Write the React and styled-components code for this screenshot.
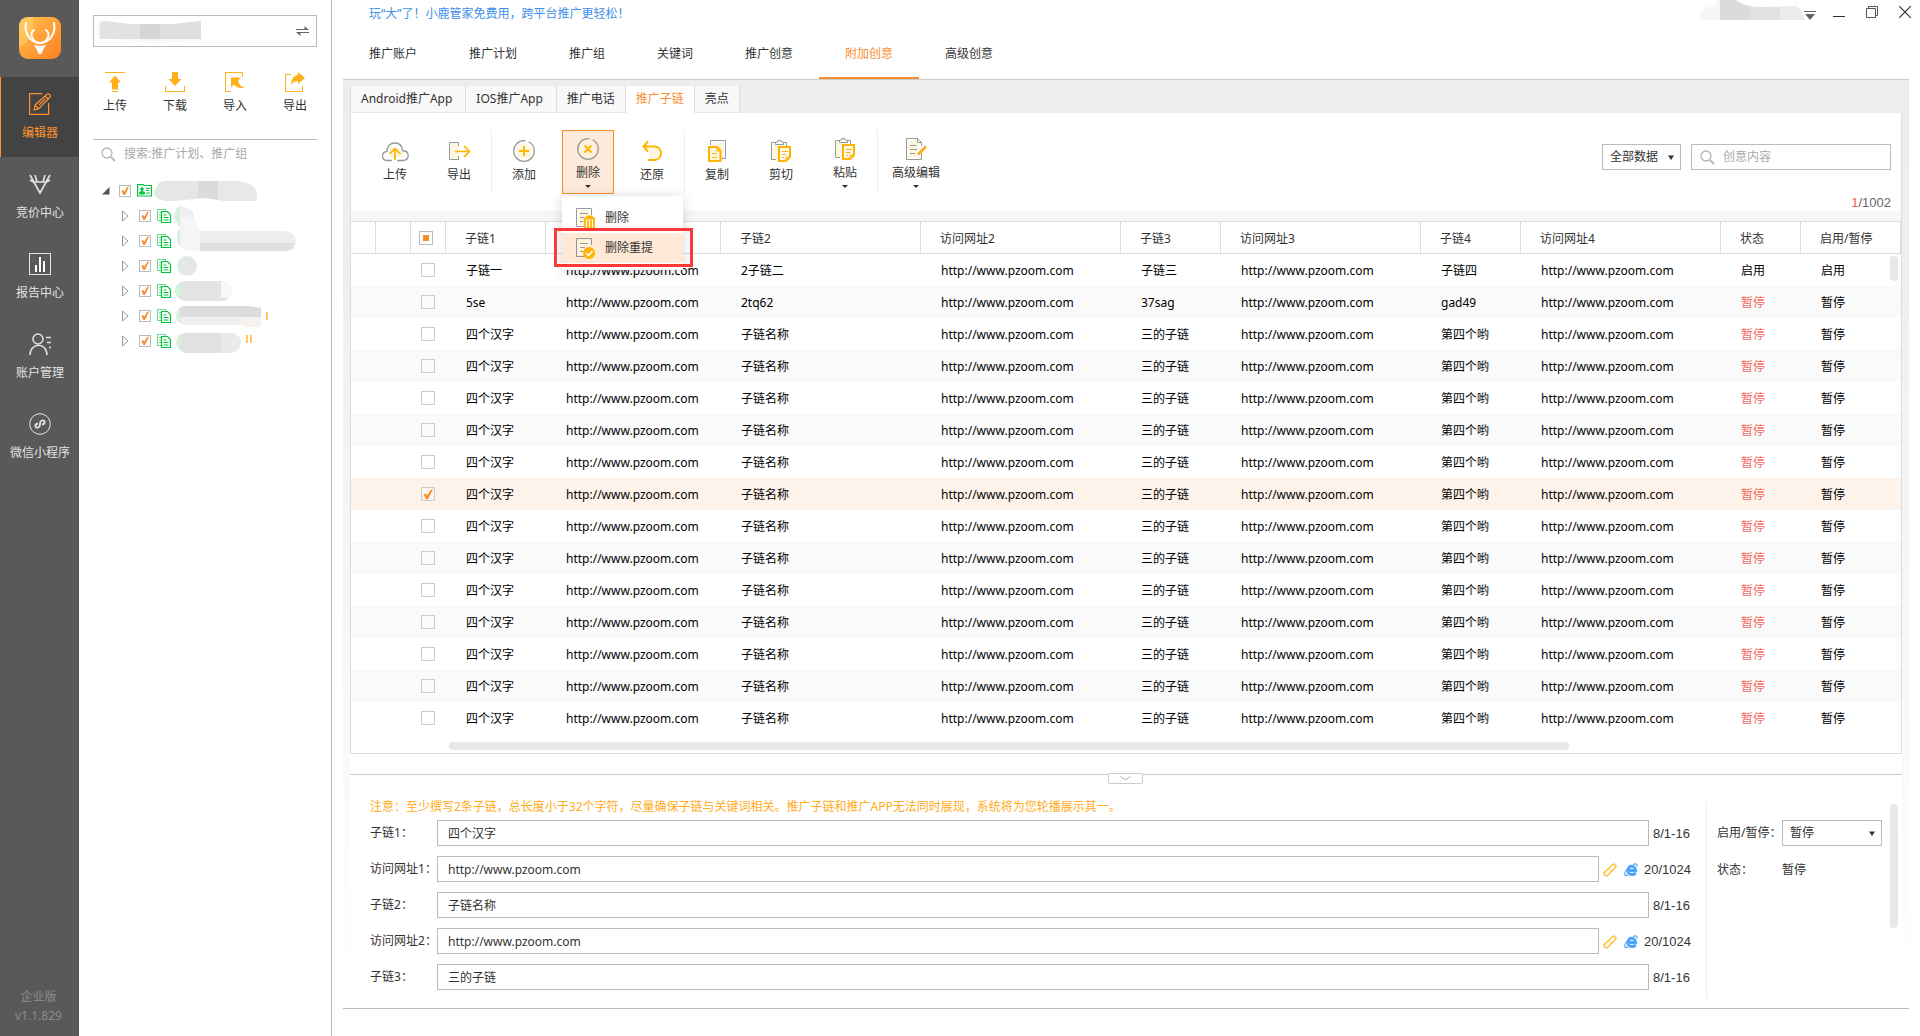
import React, { useState } from 'react';
import styled, { createGlobalStyle, css } from 'styled-components';

const GlobalStyle = createGlobalStyle`
  * {
    box-sizing: border-box;
  }
  body {
    margin: 0;
    background: #fff;
    color: #333;
    font: 12px/16px 'Noto Sans', 'Noto Sans CJK SC', sans-serif;
  }
  button, input, select {
    font: inherit;
    color: inherit;
    margin: 0;
    padding: 0;
    border: 0;
    background: none;
    outline: none;
    border-radius: 0;
  }
  a {
    color: inherit;
    text-decoration: none;
  }
  svg {
    display: block;
    flex: none;
  }
`;

/* ---------- layout ---------- */

const Page = styled.div`
  display: flex;
  min-height: 100vh;
`;

const Sidebar = styled.nav`
  display: flex;
  flex-direction: column;
  flex: none;
  width: 79px;
  background: #595959;
  color: #e2e2e2;
`;

const LogoBox = styled.div`
  display: flex;
  justify-content: center;
  height: 77px;
  padding-top: 17px;
`;

const SideItem = styled.a`
  display: flex;
  flex-direction: column;
  align-items: center;
  gap: 10px;
  height: 80px;
  padding-top: 16px;
  border-left: 1px solid ${props => (props.$active ? '#ff9331' : 'transparent')};
  background: ${props => (props.$active ? '#434343' : 'transparent')};
  color: ${props => (props.$active ? '#ff9331' : '#e2e2e2')};
`;

const Version = styled.div`
  margin-top: auto;
  padding: 0 2px 11px 0;
  text-align: center;
  line-height: 19px;
  color: #8c8c8c;
`;

const TreePanel = styled.aside`
  flex: none;
  width: 253px;
  padding: 15px 14px 0;
  border-right: 1px solid #bbb;
`;

const AccountBox = styled.div`
  display: flex;
  align-items: center;
  justify-content: space-between;
  height: 32px;
  padding: 0 7px 0 2px;
  border: 1px solid #bbb;
`;

const QuickActions = styled.div`
  display: flex;
  justify-content: space-between;
  height: 93px;
  padding: 25px 10px 0;
  border-bottom: 1px solid #bbb;
`;

const QuickButton = styled.button`
  display: flex;
  flex-direction: column;
  align-items: center;
  gap: 6px;
  cursor: pointer;
`;

const TreeSearch = styled.label`
  display: flex;
  align-items: center;
  gap: 8px;
  height: 28px;
  padding-left: 8px;
`;

const SearchInput = styled.input`
  flex: 1;
  min-width: 0;
  &::placeholder {
    color: #a9a9a9;
    opacity: 1;
  }
`;

const Tree = styled.ul`
  margin: 0;
  padding: 10px 0 0;
  list-style: none;
`;

const TreeRow = styled.li`
  display: flex;
  align-items: center;
  height: 25px;
  padding-left: ${props => (props.$child ? 29 : 9)}px;
`;

const Fold = styled.span`
  width: 17px;
`;

const TreeIcon = styled.span`
  width: 15px;
  margin: 0 2px 0 6px;
`;

const Main = styled.main`
  flex: 1;
  min-width: 0;
`;

const TitleBar = styled.header`
  display: flex;
  justify-content: space-between;
  height: 27px;
  padding: 0 9px 0 37px;
`;

const Slogan = styled.a`
  line-height: 27px;
  color: #3f8ee8;
`;

const WindowControls = styled.div`
  display: flex;
  align-items: flex-start;
`;

const WindowButton = styled.button`
  margin: ${props => props.$top || 6}px 0 0 ${props => props.$left}px;
`;

const MainNav = styled.nav`
  display: flex;
  height: 53px;
  margin: 0 11px;
  border-bottom: 1px solid #ccc;
`;

const NavItem = styled.a`
  height: 52px;
  padding: 0 26px;
  line-height: 54px;
  ${props => props.$active && css`
    border-bottom: 2px solid #f78e2f;
    color: #f78e2f;
  `}
`;

const Workspace = styled.div`
  margin: 0 11px;
  padding: 6px 7px 0;
  border-bottom: 1px solid #bbb;
  background: linear-gradient(#ededed, #eee 15%, #fff);
`;

const Tabs = styled.div`
  display: flex;
  height: 27px;
  border-left: 1px solid #ddd;
`;

const Tab = styled.button`
  padding: 0 ${props => (props.$wide ? 13 : 10)}px 0 10px;
  border-right: 1px solid #ddd;
  border-bottom: 1px solid ${props => (props.$active ? '#fff' : '#e5e5e5')};
  background: ${props => (props.$active ? '#fff' : '#f8f8f8')};
  color: ${props => (props.$active ? '#f78e2f' : '#333')};
`;

const Panel = styled.section`
  border: 1px solid #ddd;
  border-top: 0;
  background: #fff;
`;

/* ---------- toolbar ---------- */

const Toolbar = styled.div`
  display: flex;
  height: 98px;
  padding: 17px 10px 0 12px;
`;

const ToolGroup = styled.div`
  display: flex;
  height: 64px;
  border-right: ${props => (props.$last ? '0' : '1px solid #eee')};
`;

const ToolSlot = styled.div`
  position: relative;
  margin: 0 6px;
`;

const ToolButton = styled.button`
  display: flex;
  flex-direction: column;
  align-items: center;
  min-width: 52px;
  height: 64px;
  padding: ${props => (props.$caret ? 7 : 9)}px 7px 0;
  border: 1px solid ${props => (props.$open ? '#f78e2f' : 'transparent')};
  background: ${props => (props.$open ? '#feeadb' : 'transparent')};
`;

const ToolLabel = styled.span`
  margin-top: 5px;
`;

const Filters = styled.div`
  display: grid;
  grid-template-columns: 79px 200px;
  column-gap: 10px;
  align-content: space-between;
  margin-left: auto;
  padding: 14px 0 0;
`;

const SearchBox = styled.label`
  display: flex;
  align-items: center;
  gap: 8px;
  height: 26px;
  padding: 0 8px;
  border: 1px solid #bbb;
`;

const Counter = styled.div`
  grid-column: 2;
  text-align: right;
  font: 13px/16px 'Liberation Sans', sans-serif;
  color: #666;
  b {
    font-weight: normal;
    color: #f0614f;
  }
`;

const SelectBox = styled.div`
  position: relative;
  height: 26px;
  border: 1px solid #bbb;
  select {
    appearance: none;
    width: 100%;
    height: 24px;
    padding: 0 7px;
  }
  svg {
    position: absolute;
    top: 10px;
    right: 6px;
    pointer-events: none;
  }
`;

const Menu = styled.div`
  position: absolute;
  z-index: 2;
  top: 66px;
  left: 0;
  width: 121px;
  padding: 7px 0;
  background: #fff;
  box-shadow: 0 1px 12px rgba(0, 0, 0, 0.16);
`;

const MenuItem = styled.button`
  display: flex;
  align-items: center;
  gap: 9px;
  width: 100%;
  height: 30px;
  padding-left: 14px;
  background: ${props => (props.$hot ? '#fee8d6' : '#fff')};
`;

const Highlight = styled.div`
  position: absolute;
  z-index: 3;
  top: 98px;
  left: -8px;
  width: 139px;
  height: 39px;
  border: 3px solid #fb3838;
  pointer-events: none;
`;

/* ---------- table ---------- */

const Band = styled.div`
  height: 10px;
  background: #f6f6f6;
`;

const TableArea = styled.div`
  position: relative;
`;

const Table = styled.table`
  width: 100%;
  table-layout: fixed;
  border-collapse: separate;
  border-spacing: 0;
`;

const Th = styled.th`
  height: 33px;
  padding: ${props => (props.$tick ? '0 0 0 8px' : '2px 0 0 19px')};
  border: solid #ddd;
  border-width: 1px 1px 1px 0;
  font-weight: normal;
  text-align: left;
  white-space: nowrap;
`;

const Tr = styled.tr`
  color: #000;
  background: ${props => (props.$selected ? '#fef3ea' : props.$odd ? '#fafafa' : '#fff')};
`;

const Td = styled.td`
  height: 32px;
  padding: ${props => (props.$tick ? '0 0 0 10px' : '2px 0 0 20px')};
  color: ${props => (props.$alert ? '#f96a5d' : 'inherit')};
  white-space: nowrap;
`;

const Tick = styled.input`
  appearance: none;
  display: block;
  flex: none;
  width: ${props => props.$size || 14}px;
  height: ${props => props.$size || 14}px;
  border: 1px solid ${props => (props.$strong ? '#bbb' : '#ccc')};
  background: ${props => (props.$partial ? '#f78e2f content-box' : 'transparent')};
  padding: ${props => (props.$partial ? 3 : 0)}px;
  &:checked::after {
    content: '';
    display: block;
    width: 100%;
    height: 100%;
    background: #f78e2f;
    clip-path: polygon(14% 52%, 32% 46%, 42% 62%, 70% 18%, 92% 8%, 50% 94%, 34% 94%);
  }
`;

const ScrollRow = styled.div`
  height: 19px;
  padding: 8px 332px 0 98px;
`;

const Thumb = styled.div`
  height: 8px;
  border-radius: 4px;
  background: #e8e8e8;
`;

const SideThumb = styled.div`
  position: absolute;
  top: ${props => props.$top}px;
  right: ${props => props.$right}px;
  width: 8px;
  height: ${props => props.$length}px;
  border-radius: 4px;
  background: #e8e8e8;
`;

/* ---------- editor ---------- */

const EditorWrap = styled.div`
  padding-top: 20px;
  background: #fff;
`;

const Editor = styled.section`
  position: relative;
  display: flex;
  padding: 24px 0 10px;
  border-top: 1px solid #ccc;
`;

const Collapse = styled.button`
  position: absolute;
  top: -2px;
  left: calc(50% - 18px);
  display: flex;
  align-items: center;
  justify-content: center;
  width: 35px;
  height: 11px;
  border: 1px solid #ccc;
  border-radius: 0 0 2px 2px;
  background: #fff;
`;

const Form = styled.form`
  display: flex;
  flex: 1;
  flex-direction: column;
  gap: 10px;
  min-width: 0;
  padding: 0 15px 8px 20px;
`;

const Note = styled.p`
  margin: 0 0 -5px;
  color: #ffab19;
`;

const Field = styled.div`
  display: flex;
  align-items: center;
`;

const FieldLabel = styled.label`
  flex: none;
  width: ${props => props.$width || 67}px;
  white-space: nowrap;
`;

const FieldInput = styled.input`
  flex: 1;
  min-width: 0;
  height: 26px;
  padding: 0 10px;
  border: 1px solid #bbb;
`;

const FieldMeta = styled.div`
  display: flex;
  align-items: center;
  justify-content: space-between;
  width: ${props => (props.$wide ? 92 : 42)}px;
  padding: 2px 0 0 4px;
  font: 13px/16px 'Liberation Sans', sans-serif;
  white-space: nowrap;
`;

const StatusPane = styled.div`
  position: relative;
  display: flex;
  flex: none;
  flex-direction: column;
  gap: 10px;
  width: 196px;
  margin-top: 4px;
  padding: 17px 20px 0 10px;
  border-left: 1px solid #eee;
`;

const StatusSelect = styled(SelectBox)`
  width: 100px;
`;

const StatusValue = styled.span`
  line-height: 28px;
`;

/* ---------- icons ---------- */

const Icon = ({ w = 22, h = w, children, ...rest }) => (
  <svg width={w} height={h} viewBox={`0 0 ${w} ${h}`} fill="none" stroke="currentColor" aria-hidden="true" {...rest}>
    {children}
  </svg>
);

const Logo = () => (
  <Icon w={42} strokeLinecap="round">
    <defs>
      <linearGradient id="logo" x1="0" y1="0" x2="1" y2="1">
        <stop offset="0" stopColor="#ffc34f" />
        <stop offset="1" stopColor="#fc7f22" />
      </linearGradient>
    </defs>
    <rect width="42" height="42" rx="9" fill="url(#logo)" stroke="none" />
    <path d="M0 30C10 27 15 16 14 0H9C3 0 0 4 0 9z" fill="#ffd56e" opacity=".5" stroke="none" />
    <path d="M7 6C5 16 11 26 21 26S37 16 35 6" stroke="#fff" strokeWidth="2" />
    <path d="M15 13C10 17 13 24 20 26M27 13C32 17 29 24 22 26" stroke="#fff" strokeWidth="2" />
    <path d="M15 28l6 1 6-1-3 5-1.500 4h-3L18 33z" fill="#fff" stroke="none" />
  </Icon>
);

const Search = () => (
  <Icon w={15} stroke="#b5b5b5" strokeWidth="1.3">
    <circle cx="6" cy="6" r="5" />
    <path d="M10 10l4 4" strokeWidth="1.8" />
  </Icon>
);

const Caret = () => (
  <Icon w={6} h={5} fill="#333" stroke="none">
    <path d="M0 .5h6L3 5z" />
  </Icon>
);

const ToolCaret = styled.span`
  margin-top: 4px;
  border: solid transparent;
  border-width: 3px 3px 0;
  border-top-color: #333;
`;

const sideIcons = {
  edit: (
    <Icon strokeWidth="1.2">
      <path d="M13 .6H.6v20.800h19V10" />
      <path d="M5 17l1-5L18 1.200c2-1 4 1 3 3L9.500 16zM6 12l3.500 4M16 3l3.500 3.500M10 12l6-6" />
    </Icon>
  ),
  bid: (
    <Icon strokeWidth="1.600">
      <path d="M1 2l10 18L21 2M4.500 9h13M1 7l3.500 2M6 2l2 7M21 7l-3.500 2M16 2l-2 7" />
    </Icon>
  ),
  report: (
    <Icon>
      <rect x=".5" y=".5" width="21" height="21" />
      <path d="M7 12v7M11 4v15M15 8v11" strokeWidth="2" stroke="#fff" />
    </Icon>
  ),
  account: (
    <Icon strokeWidth="1.500">
      <circle cx="9" cy="6" r="5" />
      <path d="M1 22C1 9 18 9 18 22M17 4.500h5M18 9.500h4M20 14.500h2" />
    </Icon>
  ),
  wechat: (
    <Icon>
      <circle cx="11" cy="11" r="10.300" />
      <path d="M9 10.500c-4 .5-3 5 0 4 2-.5 2-2 2-3.500s0-3 2-3.500c3-1 4 3.500 0 4" strokeWidth="1.800" />
    </Icon>
  ),
};

const quickIcons = {
  upload: (
    <Icon w={20} fill="#ffb119" stroke="none">
      <path d="M0 0h20v1H0zM10 3.500l6 7h-3v7H7v-7H4zM7 19h6v1H7z" />
    </Icon>
  ),
  download: (
    <Icon w={20} fill="#ffb119" stroke="none">
      <path d="M7 0h6v7h3.500L10 14 3.500 7H7zM0 14h1v5h18v-5h1v6H0z" />
    </Icon>
  ),
  importIn: (
    <Icon w={20} fill="#ffb119" stroke="none">
      <path d="M0 0h18v5h-1V1H1v18h5v1H0zM6 5.500h10l-3 3c1 4 3 6 7 7-5 1-9 0-11-3l-3 3z" />
    </Icon>
  ),
  exportOut: (
    <Icon w={20} fill="#ffb119" stroke="none">
      <path d="M0 2h6v1H1v16h16v-5h1v6H0zM13 0l7 6-7 6V9c-3 0-5 1-7 4 0-5 2-9 7-10z" />
    </Icon>
  ),
};

const toolIcons = {
  cloud: (
    <Icon w={28} h={22}>
      <path d="M8 8h14v10H8z" fill="#fff6e2" stroke="none" />
      <path d="M11 20.500H6C0 20 0 12 6 11.500 6 6 9 3 14 3s7 3 7.500 7.500C29 11 29 20 22 20.500h-6" stroke="#999" strokeWidth="1.300" />
      <path d="M14 20V8.500M8.500 14L14 8.500l5.500 5.500" stroke="#ffb400" strokeWidth="1.700" />
    </Icon>
  ),
  out: (
    <Icon>
      <path d="M2 3h8v17H2z" fill="#fff6e2" stroke="none" />
      <path d="M10.500 6V2.500h-9v17h9V16" stroke="#999" />
      <path d="M7 11.500h14M16 6l5.500 5.500L16 17" stroke="#ffb400" strokeWidth="1.700" />
    </Icon>
  ),
  add: (
    <Icon>
      <circle cx="11" cy="11" r="10.300" stroke="#999" strokeWidth="1.300" strokeDasharray="50 3 20 3" />
      <circle cx="11" cy="11" r="8" fill="#fff6e2" stroke="none" />
      <path d="M11 6v10M6 11h10" stroke="#ffb400" strokeWidth="2" />
    </Icon>
  ),
  remove: (
    <Icon>
      <circle cx="11" cy="11" r="10.300" stroke="#999" strokeWidth="1.300" strokeDasharray="50 3 20 3" />
      <circle cx="11" cy="11" r="8" fill="#fff3dc" stroke="none" />
      <path d="M7.500 7.500l7 7M14.500 7.500l-7 7" stroke="#ffb400" strokeWidth="2" />
    </Icon>
  ),
  undo: (
    <Icon>
      <path d="M8 8h10v11H8z" fill="#fff6e2" stroke="none" />
      <path d="M7 1.500L2.500 6.500 7 11.500M3 6.500h11c8 .5 8 13 0 13.500H7" stroke="#ffb400" strokeWidth="2" />
    </Icon>
  ),
  copy: (
    <Icon>
      <rect x="6" y="3" width="12" height="15" fill="#fff6e2" stroke="none" />
      <path d="M4.500 5V.5h15v18H15" stroke="#999" />
      <path d="M3 7h8l3.500 3.500V21H3z" fill="#fff6e2" stroke="#ffb400" strokeWidth="2" />
      <path d="M10.500 7v4H14M6 13.500h5M6 17.500h5" stroke="#ffb400" />
    </Icon>
  ),
  paste: (
    <Icon>
      <rect x="2" y="4" width="12" height="15" fill="#fff6e2" stroke="none" />
      <path d="M6 19.500H1.500v-17H5m8 0h3.500V6M5.500 4.500V2H8V.5h3V2h2.500v2.500z" stroke="#999" />
      <path d="M9 7h11v10l-4 4H9z" fill="#fffaf0" stroke="#ffb400" strokeWidth="2" />
      <path d="M12 11.500h6M12 14.500h4M12 17.500h2M16 21v-4h4" stroke="#ffb400" />
    </Icon>
  ),
  advanced: (
    <Icon>
      <path d="M3 3h10v17H3z" fill="#fff6e2" stroke="none" />
      <path d="M16.500 15v6.500h-15V.5h11l4 4V8M12.500.5v4h4M5 7.500h6M5 11.500h7M5 15.500h5" stroke="#999" />
      <path d="M13 16.500L21 8.500" stroke="#ffa51f" strokeWidth="2.600" />
    </Icon>
  ),
};

const MenuSheet = ({ children }) => (
  <Icon w={20} h={22}>
    <rect x="2.500" y="3" width="11" height="15" fill="#fff6e2" stroke="none" />
    <path d="M8 19.500H.5V1.500h15V8M4 6.500h8M4 10.500h5M4 14.500h3" stroke="#999" />
    {children}
  </Icon>
);

const TrashSheet = () => (
  <MenuSheet>
    <path d="M8 10h11v12H8z" fill="#fff" stroke="none" />
    <path d="M8 11.500h11M11 11V9.500h5V11" stroke="#ffb400" strokeWidth="1.800" />
    <path d="M9 12v9.500h9V12M12 13v8M15 13v8" stroke="#ffb400" strokeWidth="1.800" />
  </MenuSheet>
);

const CheckSheet = () => (
  <MenuSheet>
    <circle cx="13" cy="16" r="6" fill="#ffb400" stroke="none" />
    <path d="M10 16l2.500 2.500 4-4.500" stroke="#fff" strokeWidth="1.600" />
  </MenuSheet>
);

const AccountIcon = () => (
  <Icon w={15} h={13} stroke="#00c53c">
    <path d="M.6 1.500V12h13.800V1.500H7L6 .6H.6z" strokeWidth="1.200" />
    <circle cx="5" cy="5" r="1.300" fill="#00c53c" />
    <path d="M2.500 10V8.500L5 7l2.500 1.500V10zM9 4.500h4M9 6.500h3M9 9h4" fill="#00c53c" />
  </Icon>
);

const PlanIcon = () => (
  <Icon w={15} h={14} stroke="#00c53c">
    <path d="M4 11.500H.5V.5h8V2M2 3.500h2M2 6h2M2 8.500h2" opacity=".6" />
    <path d="M4.500 2.500h6l3 3v8h-9zM6.500 6h3M6.500 8.500h5M6.500 11h5" strokeWidth="1.200" />
  </Icon>
);

const LinkIcon = () => (
  <Icon w={14} stroke="#ffc02e" strokeWidth="1.500">
    <path d="M6 5l3.500-3.500a1.500 1.500 0 012 0l1 1a1.500 1.500 0 010 2L9 8 7 8M8 9l-3.500 3.500a1.500 1.500 0 01-2 0l-1-1a1.500 1.500 0 010-2L5 6h2" />
  </Icon>
);

const BrowserIcon = () => (
  <Icon w={14} stroke="#4fa5fb">
    <path d="M4 7.600h7.500C11.500 2 4 2 4 7.300S10 12.500 11.500 9.500" strokeWidth="3" />
    <path d="M9 1.500c3-1.500 4.500-.5 3.800 2M3 6C0 10 0 14 4 12" strokeWidth="1.200" />
  </Icon>
);

// Masked names: shape is the clip outline, blocks are [x, y, w, h, fill]
const Smudge = ({ id, w, h, shape, blocks, children }) => (
  <svg width={w} height={h} viewBox={`0 0 ${w} ${h}`} aria-hidden="true">
    <clipPath id={id}><path d={shape} /></clipPath>
    <g clipPath={`url(#${id})`}>
      {blocks.map(([x, y, bw, bh, fill]) => (
        <rect key={`${x}-${y}`} x={x} y={y} width={bw} height={bh} fill={fill} />
      ))}
    </g>
    {children}
  </svg>
);

/* ---------- data ---------- */

const sideItems = [
  { label: '编辑器', icon: 'edit', active: true },
  { label: '竞价中心', icon: 'bid' },
  { label: '报告中心', icon: 'report' },
  { label: '账户管理', icon: 'account' },
  { label: '微信小程序', icon: 'wechat' },
];

const quickActions = [
  { label: '上传', icon: 'upload' },
  { label: '下载', icon: 'download' },
  { label: '导入', icon: 'importIn' },
  { label: '导出', icon: 'exportOut' },
];

const navItems = ['推广账户', '推广计划', '推广组', '关键词', '推广创意', '附加创意', '高级创意'];
const tabs = ['Android推广App', 'IOS推广App', '推广电话', '推广子链', '亮点'];

const toolGroups = [
  [{ label: '上传', icon: 'cloud' }, { label: '导出', icon: 'out' }],
  [{ label: '添加', icon: 'add' }, { label: '删除', icon: 'remove', caret: true, menu: true }, { label: '还原', icon: 'undo' }],
  [{ label: '复制', icon: 'copy' }, { label: '剪切', icon: 'paste' }, { label: '粘贴', icon: 'paste', caret: true }],
  [{ label: '高级编辑', icon: 'advanced', caret: true }],
];

const columns = [
  ['子链1', 100], ['访问网址1', 175], ['子链2', 200], ['访问网址2', 200], ['子链3', 100],
  ['访问网址3', 200], ['子链4', 100], ['访问网址4', 200], ['状态', 80], ['启用/暂停', 100],
];

const url = 'http://www.pzoom.com';
const paused = ['四个汉字', url, '子链名称', url, '三的子链', url, '第四个哟', url, '暂停', '暂停'];
const rows = [
  ['子链一', url, '2子链二', url, '子链三', url, '子链四', url, '启用', '启用'],
  ['5se', url, '2tq62', url, '37sag', url, 'gad49', url, '暂停', '暂停'],
  ...Array(13).fill(paused),
];

const fields = [
  { id: 'link1', label: '子链1', value: '四个汉字', count: '8/1-16' },
  { id: 'url1', label: '访问网址1', value: url, count: '20/1024', isUrl: true },
  { id: 'link2', label: '子链2', value: '子链名称', count: '8/1-16' },
  { id: 'url2', label: '访问网址2', value: url, count: '20/1024', isUrl: true },
  { id: 'link3', label: '子链3', value: '三的子链', count: '8/1-16' },
];

const mint = '#d3f1dc';
const treeNames = [
  { w: 104, h: 22, shape: 'M4 4Q6 1 12 1H84Q102 3 103 14V21H70L50 18 20 21Q0 22 0 12z', blocks: [[0, 0, 4, 22, mint], [4, 0, 40, 22, '#e6e6e6'], [44, 0, 20, 22, '#dbdbdb'], [64, 0, 40, 22, '#e8e8e8']] },
  { w: 24, h: 25, shape: 'M1 10Q4 0 11 4Q20 6 20 14L24 25H6Q0 16 1 10z', blocks: [[0, 0, 6, 25, mint], [6, 0, 18, 14, '#efefef'], [6, 14, 18, 11, '#f5f5f5']] },
  { w: 122, h: 25, shape: 'M3 11Q3 0 8 0H24L26 3H110Q121 4 122 12Q122 22 112 23H20Q4 22 3 11z', blocks: [[0, 0, 6, 25, mint], [6, 0, 20, 25, '#f5f5f5'], [26, 0, 96, 15, '#ededed'], [26, 15, 96, 10, '#dfdfdf']] },
  { w: 24, h: 22, shape: 'M3 11a10 10 0 0120 0a10 10 0 01-20 0z', blocks: [[0, 0, 7, 22, mint], [7, 0, 17, 22, '#e6e6e6']] },
  { w: 60, h: 22, shape: 'M1 11Q2 1 12 1H50Q57 4 58 11Q57 20 48 21H12Q2 20 1 11z', blocks: [[0, 0, 7, 22, mint], [7, 0, 40, 22, '#e4e4e4'], [47, 0, 13, 18, '#f7f7f7'], [47, 18, 13, 4, '#dedede']] },
  { w: 96, h: 22, shape: 'M2 11Q3 1 12 1H75L87 3V22H72L68 20H12Q2 19 2 11z', blocks: [[0, 0, 6, 22, mint], [6, 0, 81, 12, '#dcdcdc'], [6, 12, 60, 10, '#efefef'], [66, 12, 21, 10, '#f5f2f0']], bars: [92] },
  { w: 80, h: 25, shape: 'M2 14Q3 5 12 5H58Q67 7 67 15Q66 23 58 25H12Q3 23 2 14z', blocks: [[0, 0, 7, 25, mint], [7, 0, 40, 25, '#e1e1e1'], [47, 0, 21, 25, '#eaeaea']], bars: [72, 76] },
];

/* ---------- components ---------- */

const DeleteMenu = () => (
  <>
    <Menu>
      <MenuItem type="button"><TrashSheet />删除</MenuItem>
      <MenuItem type="button" $hot><CheckSheet />删除重提</MenuItem>
    </Menu>
    <Highlight />
  </>
);

const TreeSide = () => (
  <TreePanel>
    <AccountBox>
      <Smudge
        id="account"
        w={120}
        h={24}
        shape="M0 11Q2 1 10 2L34 5H76L105 2V20L118 21 60 24 4 20z"
        blocks={[[0, 0, 4, 24, '#f7f7f7'], [4, 0, 40, 20, '#e2e2e2'], [44, 0, 20, 20, '#d6d6d6'], [64, 0, 41, 20, '#dfdfdf'], [20, 20, 100, 4, '#f8f8f8']]}
      />
      <Icon w={13} h={12} stroke="#666">
        <path d="M0 4.500h12.500M13 7.500H.5" />
        <path d="M8.500 1l4 3.500h-4zM4.500 11l-4-3.500h4z" fill="#666" stroke="none" />
      </Icon>
    </AccountBox>
    <QuickActions>
      {quickActions.map(({ label, icon }) => (
        <QuickButton key={label} type="button">
          {quickIcons[icon]}
          {label}
        </QuickButton>
      ))}
    </QuickActions>
    <TreeSearch>
      <Search />
      <SearchInput type="text" placeholder="搜索:推广计划、推广组" aria-label="搜索" />
    </TreeSearch>
    <Tree>
      {treeNames.map(({ bars = [], ...name }, i) => (
        <TreeRow key={i} $child={i > 0}>
          <Fold>
            {i === 0 ? (
              <Icon w={8} h={8} fill="#555" stroke="none"><path d="M7.500 0v7.500H0z" /></Icon>
            ) : (
              <Icon w={7} h={12} stroke="#999"><path d="M.5 1v10L6 6z" /></Icon>
            )}
          </Fold>
          <Tick type="checkbox" $size={12} $strong defaultChecked aria-label={`第${i + 1}项`} />
          <TreeIcon>{i === 0 ? <AccountIcon /> : <PlanIcon />}</TreeIcon>
          <Smudge id={`name${i}`} {...name}>
            {bars.map((x) => <rect key={x} x={x} y="7" width="2" height="8" fill="#ffc56b" />)}
          </Smudge>
        </TreeRow>
      ))}
    </Tree>
  </TreePanel>
);

const LinkTable = () => {
  const [selected, setSelected] = useState([7]);

  const toggle = (i) => {
    setSelected(selected.includes(i) ? selected.filter((n) => n !== i) : [...selected, i]);
  };

  return (
    <TableArea>
      <Table>
        <colgroup>
          <col style={{ width: 25 }} />
          <col style={{ width: 35 }} />
          <col style={{ width: 35 }} />
          {columns.map(([title, width]) => <col key={title} style={{ width }} />)}
        </colgroup>
        <thead>
          <tr>
            <Th />
            <Th />
            <Th $tick><Tick type="checkbox" $partial $strong aria-label="全选" /></Th>
            {columns.map(([title]) => <Th key={title}>{title}</Th>)}
          </tr>
        </thead>
        <tbody>
          {rows.map((row, i) => (
            <Tr key={i} $odd={i % 2 === 1} $selected={selected.includes(i)}>
              <Td />
              <Td />
              <Td $tick>
                <Tick type="checkbox" checked={selected.includes(i)} onChange={() => toggle(i)} aria-label={`选择第${i + 1}行`} />
              </Td>
              {row.map((cell, n) => <Td key={n} $alert={n === 8 && cell === '暂停'}>{cell}</Td>)}
            </Tr>
          ))}
        </tbody>
      </Table>
      <SideThumb $top={35} $right={3} $length={25} />
      <ScrollRow><Thumb /></ScrollRow>
    </TableArea>
  );
};

const LinkEditor = () => (
  <EditorWrap>
    <Editor>
      <Collapse type="button" aria-label="收起">
        <Icon w={11} h={5} stroke="#aaa"><path d="M.5.5l5 3.500 5-3.500" /></Icon>
      </Collapse>
      <Form>
        <Note>注意：至少撰写2条子链，总长度小于32个字符，尽量确保子链与关键词相关。推广子链和推广APP无法同时展现，系统将为您轮播展示其一。</Note>
        {fields.map(({ id, label, value, count, isUrl }) => (
          <Field key={id}>
            <FieldLabel htmlFor={id}>{label}：</FieldLabel>
            <FieldInput id={id} type="text" defaultValue={value} />
            <FieldMeta $wide={isUrl}>
              {isUrl && <LinkIcon />}
              {isUrl && <BrowserIcon />}
              <span>{count}</span>
            </FieldMeta>
          </Field>
        ))}
      </Form>
      <StatusPane>
        <Field>
          <FieldLabel $width={65} htmlFor="status">启用/暂停：</FieldLabel>
          <StatusSelect>
            <select id="status" defaultValue="暂停">
              <option>启用</option>
              <option>暂停</option>
            </select>
            <Caret />
          </StatusSelect>
        </Field>
        <Field>
          <FieldLabel as="span" $width={65}>状态：</FieldLabel>
          <StatusValue>暂停</StatusValue>
        </Field>
        <SideThumb $top={1} $right={4} $length={124} />
      </StatusPane>
    </Editor>
  </EditorWrap>
);

const App = () => (
  <Page lang="zh-CN">
    <GlobalStyle />
    <Sidebar>
      <LogoBox><Logo /></LogoBox>
      {sideItems.map(({ label, icon, active }) => (
        <SideItem key={label} href="#" $active={active}>
          {sideIcons[icon]}
          {label}
        </SideItem>
      ))}
      <Version>企业版<br />v1.1.829</Version>
    </Sidebar>
    <TreeSide />
    <Main>
      <TitleBar>
        <Slogan href="#">玩“大”了！小鹿管家免费用，跨平台推广更轻松！</Slogan>
        <WindowControls>
          <Smudge
            id="user"
            w={104}
            h={20}
            shape="M0 20V14Q3 6 16 6V0H36Q44 7 60 7L96 6Q104 10 104 20z"
            blocks={[[0, 0, 20, 20, '#f6f6f6'], [20, 0, 30, 20, '#dbdbdb'], [50, 0, 30, 20, '#e1e1e1'], [80, 0, 24, 20, '#ebebeb']]}
          />
          <WindowButton $left={0} $top={11} aria-label="菜单">
            <Icon w={12} h={9} fill="#666" stroke="none"><path d="M0 0h12v1H0zM1 3h10L6 9z" /></Icon>
          </WindowButton>
          <WindowButton $left={17} aria-label="最小化">
            <Icon w={12} stroke="#333"><path d="M0 10.500h12" /></Icon>
          </WindowButton>
          <WindowButton $left={21} aria-label="还原窗口">
            <Icon w={12} stroke="#555"><path d="M.5 2.500h9v9h-9zM2.500 2V.5h9v9H10" /></Icon>
          </WindowButton>
          <WindowButton $left={21} aria-label="关闭">
            <Icon w={12} stroke="#333" strokeWidth="1.200"><path d="M0 0l12 12M12 0L0 12" /></Icon>
          </WindowButton>
        </WindowControls>
      </TitleBar>
      <MainNav>
        {navItems.map((item) => (
          <NavItem key={item} href="#" $active={item === '附加创意'}>{item}</NavItem>
        ))}
      </MainNav>
      <Workspace>
        <Tabs>
          {tabs.map((tab) => (
            <Tab key={tab} type="button" $wide={tab.includes('App')} $active={tab === '推广子链'}>{tab}</Tab>
          ))}
        </Tabs>
        <Panel>
          <Toolbar>
            {toolGroups.map((group, i) => (
              <ToolGroup key={i} $last={i === toolGroups.length - 1}>
                {group.map(({ label, icon, caret, menu }) => (
                  <ToolSlot key={label}>
                    <ToolButton type="button" $caret={caret} $open={menu}>
                      {toolIcons[icon]}
                      <ToolLabel>{label}</ToolLabel>
                      {caret && <ToolCaret />}
                    </ToolButton>
                    {menu && <DeleteMenu />}
                  </ToolSlot>
                ))}
              </ToolGroup>
            ))}
            <Filters>
              <SelectBox>
                <select aria-label="数据范围">
                  <option>全部数据</option>
                </select>
                <Caret />
              </SelectBox>
              <SearchBox>
                <Search />
                <SearchInput type="text" placeholder="创意内容" aria-label="创意内容" />
              </SearchBox>
              <Counter><b>1</b>/1002</Counter>
            </Filters>
          </Toolbar>
          <Band />
          <LinkTable />
        </Panel>
        <LinkEditor />
      </Workspace>
    </Main>
  </Page>
);

export default App;
